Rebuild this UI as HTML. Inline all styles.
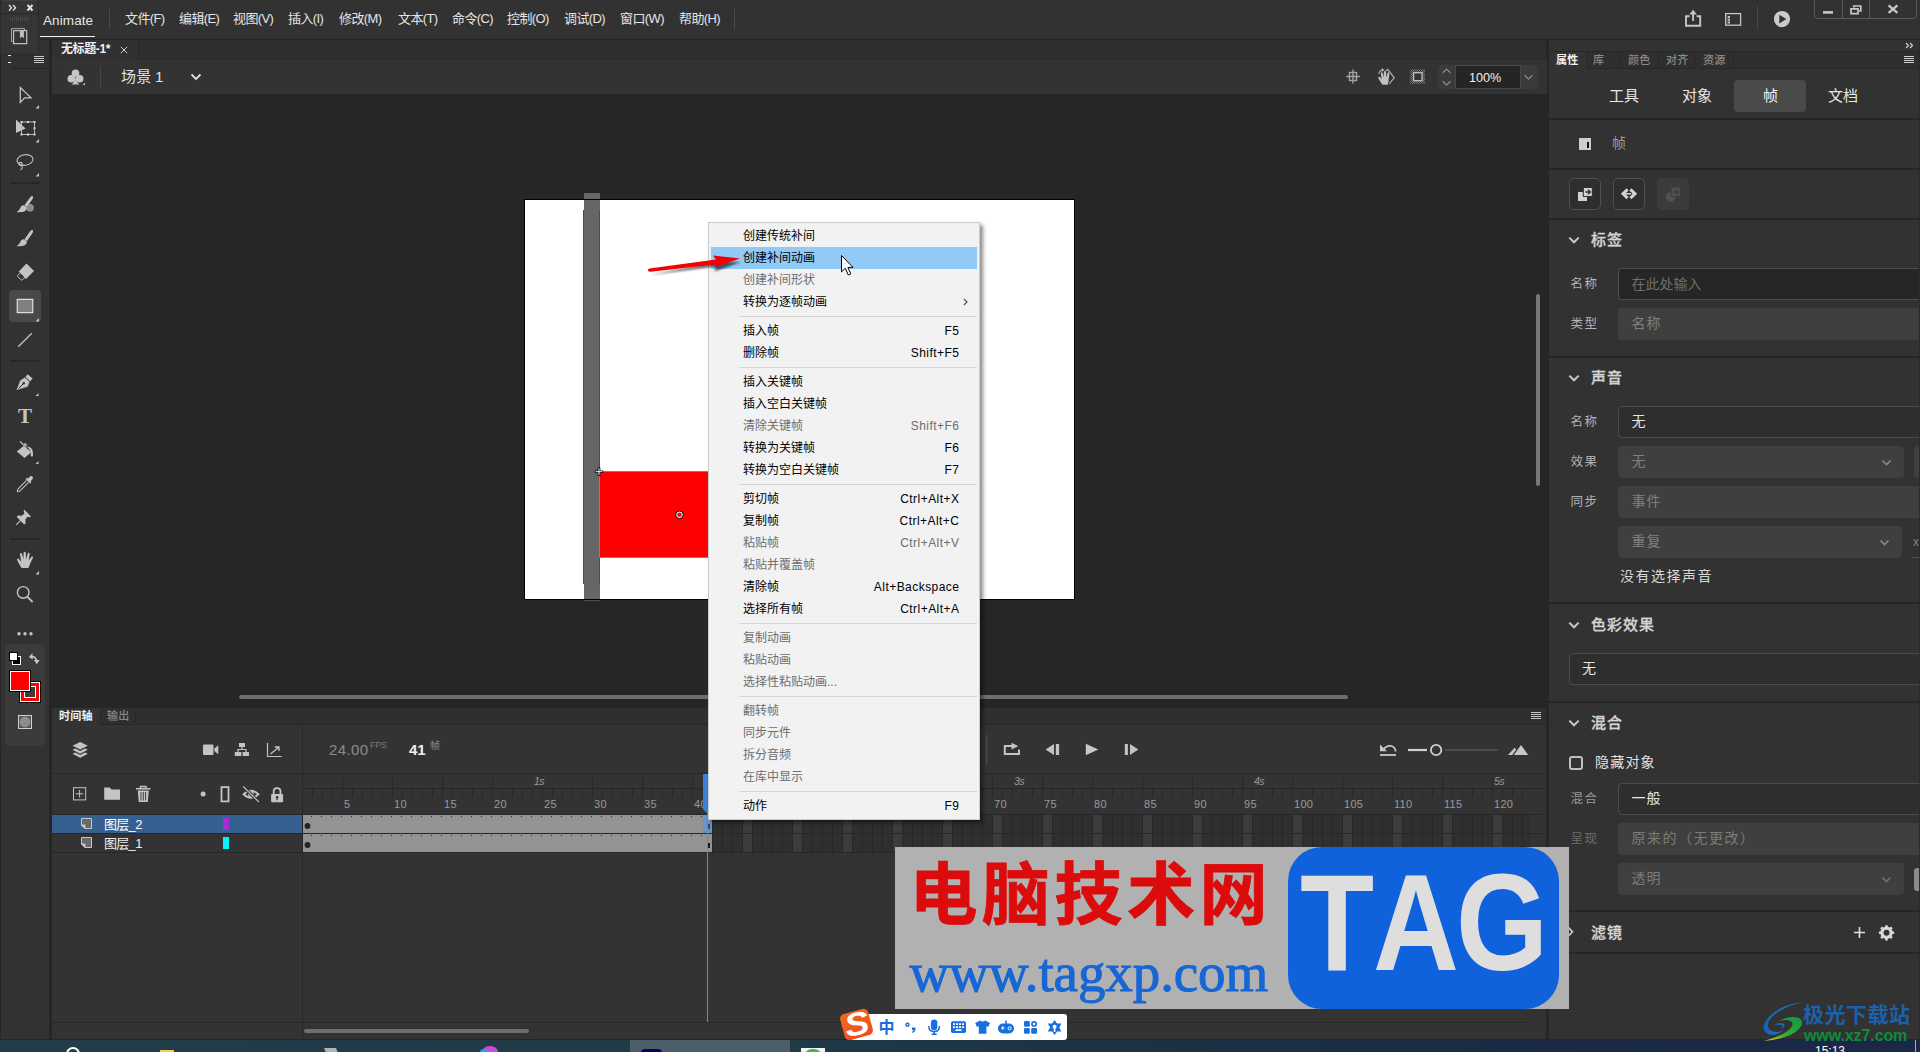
<!DOCTYPE html>
<html lang="zh-CN">
<head>
<meta charset="utf-8">
<title>Animate</title>
<style>
*{box-sizing:border-box;margin:0;padding:0}
html,body{width:1920px;height:1052px;overflow:hidden;background:#262626}
body{position:relative;font-family:"Liberation Sans","Noto Sans CJK SC",sans-serif;font-size:12px;color:#d6d6d6;-webkit-font-smoothing:antialiased}
.abs{position:absolute}
.t{position:absolute;white-space:nowrap;line-height:1}
svg{position:absolute;overflow:visible}
/* top */
#menubar{left:0;top:0;width:1920px;height:39px;background:#323232}
#menubar .mi{top:12px;font-size:13px;color:#e4e4e4;letter-spacing:-0.6px}
#docbar{left:52px;top:40px;width:1494px;height:20px;background:#2f2f2f;border-bottom:1px solid #2a2a2a}
#scenebar{left:52px;top:60px;width:1495px;height:34px;background:#333333}
/* tools */
#tools{left:0;top:40px;width:49px;height:999px;background:#323232}
/* right panel */
#props{left:1549px;top:40px;width:371px;height:999px;background:#323232}
.hdiv{position:absolute;left:0;width:371px;height:2px;background:#262626}
.sec{position:absolute;left:42px;font-size:15px;font-weight:500;-webkit-text-stroke:.3px #d4d4d4;color:#d4d4d4;letter-spacing:1px;line-height:1;white-space:nowrap}
.lbl{position:absolute;left:21.500px;margin-top:1px;font-size:12.500px;color:#b4b4b4;letter-spacing:1.400px;line-height:1;white-space:nowrap}
.inp{position:absolute;left:69px;width:320px;height:32px;border-radius:4px;font-size:14px;line-height:28px;padding-left:12.500px;letter-spacing:1px;white-space:nowrap}
.inp.txt{background:#262626 !important;line-height:30px}
.inp.on{background:#2e2e2e;border:1px solid #4c4c4c;color:#e6e6e6}
.inp.off{background:#3f3f3f;color:#808080;line-height:30.500px;padding-left:13.500px}
/* menu */
#ctx{left:708px;top:222px;width:272px;height:598px;background:#f2f2f2;border:1px solid #cccccc;box-shadow:3px 3px 4px rgba(0,0,0,.45);color:#000;font-size:12px}
#ctx .it{position:absolute;left:2px;width:266px;height:22px;line-height:23px;padding-left:32px;white-space:nowrap}
#ctx .it.dis{color:#6d6d6d}
#ctx .it.hi{background:#91c9f7}
#ctx .it .sc{position:absolute;right:17.600px;top:0;letter-spacing:.45px}
#ctx .sp{position:absolute;left:30px;width:238px;height:1px;background:#d7d7d7}
</style>
</head>
<body>
<!-- ===== top menu bar ===== -->
<div id="menubar" class="abs">
  <div class="abs" style="left:0;top:0;width:38px;height:39px;background:#353535"></div>
  <div class="t" style="left:43px;top:14px;font-size:13.500px;color:#e6e6e6;letter-spacing:.1px">Animate</div>
  <div class="abs" style="left:40px;top:36px;width:55px;height:1px;background:#f0f0f0"></div>
  <div class="abs" style="left:109px;top:9px;width:1px;height:20px;background:#4a4a4a"></div>
  <div class="t mi" style="left:125px">文件(F)</div>
  <div class="t mi" style="left:179px">编辑(E)</div>
  <div class="t mi" style="left:233px">视图(V)</div>
  <div class="t mi" style="left:288px">插入(I)</div>
  <div class="t mi" style="left:339px">修改(M)</div>
  <div class="t mi" style="left:398px">文本(T)</div>
  <div class="t mi" style="left:452px">命令(C)</div>
  <div class="t mi" style="left:507px">控制(O)</div>
  <div class="t mi" style="left:564px">调试(D)</div>
  <div class="t mi" style="left:620px">窗口(W)</div>
  <div class="t mi" style="left:679px">帮助(H)</div>
  <div class="abs" style="left:734px;top:9px;width:1px;height:20px;background:#4a4a4a"></div>
</div>
<div class="abs" style="left:0;top:39px;width:1920px;height:1px;background:#232323"></div>
<div id="docbar" class="abs">
  <div class="abs" style="left:0;top:0;width:87px;height:20px;background:#313131;border-right:1px solid #2a2a2a"></div>
  <div class="t" style="left:9px;top:3px;font-size:12px;font-weight:bold;color:#f0f0f0;letter-spacing:-.4px">无标题-1*</div>
  <svg style="left:68px;top:6px" width="8" height="8" viewBox="0 0 8 8"><path d="M.8 .8 L7.200 7.200 M7.200 .8 L.8 7.200" stroke="#cfcfcf" stroke-width="1" fill="none"/></svg>
</div>
<div id="scenebar" class="abs">
  <svg style="left:14px;top:8px" width="20" height="19" viewBox="66 68 20 19"><g fill="#c6c6c6"><circle cx="75.500" cy="73.200" r="3.800"/><circle cx="71.300" cy="78.800" r="3.800"/><circle cx="79.700" cy="78.800" r="3.800"/><path d="M75.500 76 Q75.800 82 79.500 84.600 H71.500 Q75.200 82 75.500 76Z"/><path d="M85 82.500 V85 H82.500Z"/></g></svg>
  <div class="abs" style="left:48px;top:6px;width:1px;height:23px;background:#454545"></div>
  <div class="t" style="left:69px;top:9px;font-size:15px;color:#e0e0e0;letter-spacing:.3px;word-spacing:-1px">场景 1</div>
  <svg style="left:138px;top:13px" width="12" height="8" viewBox="0 0 12 8"><path d="M1.5 1.5 L6 6 L10.5 1.5" fill="none" stroke="#e0e0e0" stroke-width="1.8"/></svg>
</div>
<!-- ===== left tools ===== -->
<div id="tools" class="abs"></div>
<div class="abs" style="left:0;top:0;width:1px;height:1039px;background:#262626"></div>
<div class="abs" style="left:49px;top:40px;width:3px;height:999px;background:#262626"></div>
<!-- floating header -->
<div class="abs" style="left:0px;top:0px;width:39px;height:55px;background:#353535;border-radius:5px 5px 0 0;border:1px solid #2a2a2a;border-top-color:#404040"></div>
<div class="abs" style="left:1px;top:13px;width:37px;height:1px;background:#2a2a2a"></div>
<svg style="left:8px;top:4px" width="26" height="8" viewBox="0 0 26 8"><path d="M1 1 L3.5 3.8 L1 6.6 M5 1 L7.5 3.8 L5 6.6" fill="none" stroke="#e0e0e0" stroke-width="1.4"/><path d="M19.5 1 L24.5 6.5 M24.5 1 L19.5 6.5" fill="none" stroke="#e0e0e0" stroke-width="2"/></svg>
<div class="abs" style="left:10px;top:17px;width:20px;height:4px;background:repeating-linear-gradient(90deg,#4a4a4a 0 1px,transparent 1px 2px)"></div>
<svg style="left:10px;top:27px" width="18" height="18" viewBox="10 27 18 18"><path d="M11.500 28.600 H24.600 V41.600 H11.500Z" fill="none" stroke="#a8a8a8" stroke-width="1"/><path d="M13.600 30.700 H26.700 V43.600 H13.600Z" fill="#353535" stroke="#bebebe" stroke-width="1.200"/><path d="M19.900 30.700 H23.900 V38.300 L21.900 36.800 L19.900 38.300Z" fill="#bebebe"/></svg>
<div class="abs" style="left:11px;top:55px;width:38px;height:14px;background:#303030;border-bottom:1px solid #262626"></div>
<div class="abs" style="left:8px;top:55px;width:3px;height:1px;background:#e8e8e8"></div>
<div class="abs" style="left:8px;top:62px;width:3px;height:1px;background:#e8e8e8"></div>
<div class="abs" style="left:34px;top:56px;width:10px;height:7px;background:repeating-linear-gradient(180deg,#c8c8c8 0 1px,transparent 1px 2px)"></div>
<!-- select -->
<svg style="left:0;top:76px" width="49" height="670" viewBox="0 76 49 670">
<g fill="none" stroke="#c4c4c4" stroke-width="1.3" stroke-linejoin="miter">
<path d="M20.3 87.6 V102.4 L24.6 97.8 H31 Z"/>
</g>
<path d="M39 105 V108.5 H35.5Z M39 139 V142.5 H35.5Z M39 173 V176.5 H35.5Z M39 318 V321.5 H35.5Z M38.5 393 V396 H35.5Z M38.5 461 V464 H35.5Z M39 571 V574.500 H35.500Z" fill="#c4c4c4"/>
<!-- free transform -->
<path d="M16 119.5 V133 L25.5 128.5Z" fill="#c4c4c4"/>
<path d="M21.500 122 H34.500 V134.500 H21.500Z" fill="none" stroke="#b8b8b8" stroke-width="1"/><path d="M20.500 121 h2 v2 h-2Z M27 121 h2 v2 h-2Z M33.500 121 h2 v2 h-2Z M33.500 127.200 h2 v2 h-2Z M33.500 133.500 h2 v2 h-2Z M27 133.500 h2 v2 h-2Z M20.500 133.500 h2 v2 h-2Z" fill="#d8d8d8"/>
<!-- lasso -->
<g fill="none" stroke="#c4c4c4" stroke-width="1.1">
<ellipse cx="25" cy="160" rx="8" ry="5.3" transform="rotate(-8 25 160)"/>
<circle cx="20.6" cy="164" r="1.6"/>
<path d="M21.5 165.5 Q23.5 168 20.5 170"/>
</g>
<path d="M10 183 H40 M10 361 H40 M10 539 H40" stroke="#272727" stroke-width="2"/>
<!-- fluid brush -->
<path d="M32.6 196 Q33.6 197.2 32.6 199 L27 207 L24.4 205.3 L30.4 197 Q31.4 195.6 32.6 196Z" fill="#c4c4c4"/>
<path d="M24.200 205.4 L27 207.6 Q26.600 211.4 22.400 212 L16.600 212.2 Q19.600 210.4 20.200 208 Q21.200 204.8 24.200 205.4Z" fill="#c4c4c4"/>
<circle cx="30" cy="207.8" r="3.5" fill="#8a8a8a" stroke="#b0b0b0" stroke-width=".6"/>
<!-- brush -->
<path d="M32.6 230 Q33.6 231.2 32.6 233 L27 241 L24.4 239.3 L30.4 231 Q31.4 229.6 32.6 230Z" fill="#c4c4c4"/>
<path d="M24.200 239.4 L27 241.6 Q26.600 245.4 22.400 246 L16.600 246.2 Q19.600 244.4 20.200 242 Q21.200 238.8 24.200 239.4Z" fill="#c4c4c4"/>
<!-- eraser -->
<path d="M26.5 263.5 L34 271 L26 279 L18.8 271.6Z" fill="#c4c4c4"/>
<path d="M20.8 272.6 L17.2 276 L21.8 280.4 L25.2 277" fill="none" stroke="#c4c4c4" stroke-width="1"/>
<!-- rectangle selected -->
<rect x="9" y="290" width="32" height="32" rx="4" fill="#494949"/>
<rect x="17.2" y="299.3" width="15.6" height="13.4" fill="#808080" stroke="#f4f4f4" stroke-width="1"/>
<path d="M39 318 V321.5 H35.5Z" fill="#c4c4c4"/>
<!-- line -->
<path d="M18.2 346.8 L31.8 333.2" stroke="#c4c4c4" stroke-width="1.3"/>
<!-- pen -->
<path d="M27.6 374.3 L32.6 378.6 L30.2 381.2 L25.4 377Z" fill="#c4c4c4"/>
<path d="M24.8 377.8 L29.4 381.8 L27.6 386.6 L16.8 389.8 L20.4 380.6Z M18.6 388.4 L23.4 383.6" fill="#c4c4c4" stroke="#c4c4c4" stroke-width=".4"/>
<path d="M18.4 388.6 L23.2 383.8" stroke="#323232" stroke-width="1"/>
<circle cx="23.8" cy="383.2" r="1.2" fill="#323232"/>
<!-- bucket -->
<path d="M23.5 446 L31.5 452 L24.5 458 L16.8 451.5Z" fill="#c4c4c4"/>
<path d="M20 441.5 L26.5 447.5 M24 445 L25 443.5 L27 445.5" fill="none" stroke="#c4c4c4" stroke-width="1.1"/>
<path d="M27 446.5 Q32.5 447 32.8 452 L33 456 Q31.6 457.6 30.6 455.6 L31 451.5Z" fill="#c4c4c4"/>
<!-- eyedropper -->
<path d="M30.6 476.2 Q32.6 475.6 33 477.6 Q33.2 479 31.8 480 L30.6 481.2 L31.4 482.2 L30.2 483.4 L25.6 479 L26.8 477.8 L28 478.6 L29.2 477.2 Q29.8 476.4 30.6 476.2Z" fill="#c4c4c4"/>
<path d="M26.6 480.4 L18.4 488.6 Q16.6 490.6 17.4 491.6 Q18.4 492.2 20.2 490.6 L28.6 482.4" fill="none" stroke="#c4c4c4" stroke-width="1.1"/>
<!-- pin -->
<path d="M24.4 509.8 L31 516.4 L29.6 517.2 L27.6 516.8 L25.4 519.4 L25.6 523.4 L24.2 524.4 L16.8 517 L17.8 515.6 L21.8 515.8 L24.4 513.4 L23.6 511Z" fill="#c4c4c4"/>
<path d="M20.4 520.6 L16.2 524.8" stroke="#c4c4c4" stroke-width="1.1"/>
<!-- hand -->
<path d="M21.6 568 Q19.8 565.6 17.2 560.2 Q16.6 558.6 17.8 558.4 Q18.8 558.4 19.8 560 L21.2 562 L20 554.6 Q19.8 553.2 20.8 553 Q21.8 553 22.2 554.4 L23.4 559.4 L23.6 553 Q23.6 551.8 24.6 551.8 Q25.6 551.8 25.8 553 L26.2 559.4 L27.6 553.8 Q28 552.6 28.9 552.8 Q29.8 553.1 29.6 554.4 L28.8 560.4 L31 557.2 Q31.8 556.2 32.6 556.6 Q33.3 557.2 32.8 558.2 Q30.4 562.6 29.6 565 Q29 567 28.4 568Z" fill="#c4c4c4"/>
<!-- zoom -->
<circle cx="23.2" cy="592.4" r="5.8" fill="none" stroke="#c4c4c4" stroke-width="1.4"/>
<path d="M27.4 596.8 L32.6 602" stroke="#c4c4c4" stroke-width="1.8"/>
<!-- dots -->
<circle cx="19" cy="633.8" r="1.7" fill="#c4c4c4"/><circle cx="25" cy="633.8" r="1.7" fill="#c4c4c4"/><circle cx="31" cy="633.8" r="1.7" fill="#c4c4c4"/>
<!-- colour box -->
<rect x="5" y="644" width="40" height="102" rx="5" fill="#3b3b3b"/>
<rect x="12.5" y="656.5" width="8" height="8" fill="#000" stroke="#fff" stroke-width="1"/>
<rect x="9.5" y="652.5" width="8" height="8" fill="#fff" stroke="#000" stroke-width="1"/>
<path d="M30 656.6 Q35.6 655.6 36.6 661" fill="none" stroke="#c8c8c8" stroke-width="1.6"/>
<path d="M29 657 L32.4 653.2 L32.8 659.6Z M34 660 H39.6 L36.8 664.2Z" fill="#c8c8c8"/>
<rect x="19.5" y="681.5" width="21" height="21" fill="#fff" stroke="#000" stroke-width="1"/>
<rect x="21" y="683" width="18" height="18" fill="#ff0000"/>
<rect x="24" y="686" width="12" height="12" fill="#fff"/>
<rect x="25" y="687" width="10" height="10" fill="#3b3b3b"/>
<rect x="9.5" y="670.5" width="21" height="21" fill="#fff" stroke="#000" stroke-width="1"/>
<rect x="11" y="672" width="18" height="18" fill="#ff0000"/>
<rect x="18.5" y="715.5" width="13" height="13" fill="#555" stroke="#d0d0d0" stroke-width="1"/>
<circle cx="25" cy="722" r="5.4" fill="#8c8c8c"/>
</svg>
<div class="t" style="left:18px;top:406px;font-family:'Liberation Serif',serif;font-size:21px;color:#c4c4c4;font-weight:bold;transform:scaleX(1.0)">T</div>
<!-- ===== stage ===== -->
<div class="abs" style="left:524px;top:199px;width:551px;height:401px;background:#000"></div>
<div class="abs" style="left:525px;top:200px;width:549px;height:399px;background:#fff"></div>
<div class="abs" style="left:584px;top:193px;width:16px;height:406px;background:#666666"></div>
<div class="abs" style="left:584px;top:199px;width:16px;height:1px;background:#000"></div>
<div class="abs" style="left:584px;top:599px;width:16px;height:1px;background:#000"></div><div class="abs" style="left:584px;top:600px;width:16px;height:1px;background:#4e4e4e"></div>
<div class="abs" style="left:583px;top:210px;width:1px;height:374px;background:#ff0000"></div>
<div class="abs" style="left:599px;top:210px;width:1px;height:374px;background:#ff0000"></div>
<div class="abs" style="left:599px;top:471px;width:111px;height:87px;background:#ff0000;border:1px solid #1da0f0"></div>
<svg style="left:590px;top:464px" width="100" height="60" viewBox="590 464 100 60">
<path d="M599 467.500 V476 M594.800 471.700 H603.200" stroke="#000" stroke-width="2.600" fill="none"/><path d="M599 468.300 V475.200 M595.600 471.700 H602.400" stroke="#fff" stroke-width="1" fill="none"/>
<path d="M598.5 468 V475 M595 471.5 H602" stroke="#fff" stroke-width="1" fill="none" opacity=".0"/>
<circle cx="679.500" cy="514.800" r="3.800" fill="#fff" stroke="#000" stroke-width="1"/><circle cx="679.500" cy="514.800" r="2.300" fill="#ff0000"/>
</svg>
<!-- stage scrollbars -->
<div class="abs" style="left:239px;top:695px;width:1109px;height:4px;border-radius:2px;background:#6e6e6e"></div>
<div class="abs" style="left:1536px;top:294px;width:4px;height:192px;border-radius:2px;background:#787878"></div>
<!-- stage toolbar right (in scene bar) -->
<svg style="left:1340px;top:62px" width="210" height="30" viewBox="1340 62 210 30">
<defs><pattern id="hat" width="2" height="2" patternUnits="userSpaceOnUse"><path d="M0 2 L2 0" stroke="#8a8a8a" stroke-width=".8"/></pattern></defs>
<g fill="none" stroke="#a4a4a4" stroke-width="1.400">
<rect x="1349.500" y="72.500" width="7" height="8"/>
<path d="M1353 69.500 V83.500 M1346.200 76.500 H1359.800"/>
</g>
<!-- hand w/ rotate -->
<path d="M1382.600 84.800 Q1380.600 82.600 1378.400 78.600 Q1377.800 77.200 1378.800 76.800 Q1379.800 76.600 1380.800 78 L1381.800 79.400 L1380.800 73.600 Q1380.700 72.400 1381.600 72.200 Q1382.500 72.200 1382.900 73.400 L1384 77.600 L1383.900 72 Q1384 71 1384.900 71 Q1385.800 71 1386 72 L1386.500 77.600 L1387.500 73 Q1387.900 72 1388.700 72.200 Q1389.500 72.600 1389.400 73.600 L1388.700 79.400 Q1388.600 83.200 1387.600 84.800Z" fill="#c0c0c0"/>
<path d="M1378.800 73.800 Q1379.400 70.400 1383 69.800 M1381.600 68.600 L1383.600 69.800 L1382 71.400" fill="none" stroke="#b4b4b4" stroke-width="1.100"/>
<path d="M1385.600 71.200 L1387.800 69.400 L1394.200 77.800 L1389.400 83.600" fill="none" stroke="#b4b4b4" stroke-width="1.100"/>
<!-- clip -->
<rect x="1410.200" y="69.300" width="14.800" height="14.600" fill="url(#hat)"/>
<rect x="1413.600" y="72.700" width="8.400" height="8" fill="#333" stroke="#c2c2c2" stroke-width="1.300"/>
</svg>
<div class="abs" style="left:1438px;top:65px;width:100px;height:24px;background:#3b3b3b;border-radius:3px"></div>
<div class="abs" style="left:1455px;top:65px;width:66px;height:24px;background:#252525;border:1px solid #484848"></div>
<div class="t" style="left:1469px;top:71.700px;font-size:12.600px;color:#f0f0f0">100%</div>
<svg style="left:1440px;top:65px" width="100" height="24" viewBox="1440 65 100 24"><g fill="none" stroke="#c8c8c8" stroke-width="1"><path d="M1442.800 72.800 L1446.600 69.200 L1450.400 72.800"/><path d="M1442.800 81.400 L1446.600 85 L1450.400 81.400"/><path d="M1524.600 75.200 L1528.500 79 L1532.400 75.200"/></g></svg>
<!-- menu-bar right icons -->
<svg style="left:1680px;top:0" width="240" height="40" viewBox="1680 0 240 40">
<g fill="none" stroke="#c6c6c6" stroke-width="1.900">
<path d="M1689.600 16.200 H1686 V25.800 H1700.200 V16.200 H1696.600"/>
<path d="M1693.100 21 V13"/>
</g>
<path d="M1689.300 14.400 L1693.100 9.800 L1696.900 14.400Z" fill="#c6c6c6"/>
<rect x="1725.700" y="13.600" width="14.900" height="11.600" fill="none" stroke="#c6c6c6" stroke-width="1.300"/>
<path d="M1727.600 16 H1730 V18 H1727.600Z M1727.600 18.700 H1730 V20.700 H1727.600Z M1727.600 21.400 H1730 V23.400 H1727.600Z" fill="#c6c6c6"/>
<path d="M1757.500 6 V30" stroke="#484848" stroke-width="1"/>
<circle cx="1782" cy="19.100" r="8.100" fill="#cacaca"/>
<path d="M1779.300 14.800 L1786.300 19.100 L1779.300 23.400Z" fill="#323232"/>
<path d="M1814.500 0 V15 Q1814.500 18.500 1818 18.500 H1913 Q1916.500 18.500 1916.500 15 V0 M1842.500 0 V18 M1869.500 0 V18" fill="none" stroke="#595959" stroke-width="1"/>
<path d="M1823 12.400 H1833" stroke="#c8c8c8" stroke-width="2.600"/>
<path d="M1853.800 7.600 V6 H1860.800 V11 H1859 M1851 8.800 H1858 V13.600 H1851Z" fill="none" stroke="#c8c8c8" stroke-width="1.700"/>
<path d="M1888.600 5.400 L1897.400 12.800 M1897.400 5.400 L1888.600 12.800" stroke="#c8c8c8" stroke-width="2.300"/>
</svg>
<!-- ===== timeline ===== -->
<div class="abs" style="left:52px;top:708px;width:1494px;height:16px;background:#2f2f2f"></div>
<div class="abs" style="left:52px;top:724px;width:1494px;height:315px;background:#333333"></div>
<div class="abs" style="left:52px;top:708px;width:48px;height:17px;background:#333333"></div>
<div class="abs" style="left:100px;top:708px;width:36px;height:16px;border-left:1px solid #292929;border-right:1px solid #292929"></div>
<div class="abs" style="left:100px;top:724px;width:1446px;height:1px;background:#272727"></div>
<div class="t" style="left:59px;top:711px;font-size:11px;font-weight:bold;color:#f2f2f2;letter-spacing:.3px">时间轴</div>
<div class="t" style="left:107px;top:711px;font-size:11px;font-weight:500;color:#8a8a8a;letter-spacing:.3px">输出</div>
<div class="abs" style="left:1531px;top:712px;width:10px;height:7px;background:repeating-linear-gradient(180deg,#c8c8c8 0 1px,transparent 1px 2px)"></div>
<div class="abs" style="left:52px;top:773px;width:250px;height:1px;background:#272727"></div>
<div class="abs" style="left:302px;top:725px;width:1px;height:314px;background:#272727"></div>
<div class="abs" style="left:52px;top:1022px;width:1478px;height:1px;background:#272727"></div>
<div class="abs" style="left:52px;top:814px;width:1494px;height:1px;background:#272727"></div>
<div class="abs" style="left:52px;top:815px;width:250px;height:18px;background:#35608f"></div>
<div class="abs" style="left:52px;top:833px;width:1494px;height:1px;background:#272727"></div>
<div class="abs" style="left:52px;top:852px;width:1494px;height:1px;background:#272727"></div>
<div class="t" style="left:104px;top:818px;font-size:13px;color:#ffffff;letter-spacing:-.7px">图层_2</div>
<div class="t" style="left:104px;top:837px;font-size:13px;color:#f0f0f0;letter-spacing:-.7px">图层_1</div>
<div class="abs" style="left:223px;top:818px;width:6px;height:12px;background:#a22fd6"></div>
<div class="abs" style="left:223px;top:837px;width:6px;height:12px;background:#00f6ff"></div>
<svg style="left:52px;top:724px" width="1494" height="314" viewBox="52 724 1494 314">
<path d="M81.500 818.5 H91.500 V828.5 H85 L81.500 825 Z" fill="#6a6a6a" stroke="#c8c8c8" stroke-width="1"/><path d="M81.500 825 H85 V828.5Z" fill="#c8c8c8" stroke="#c8c8c8" stroke-width="1"/>
<path d="M81.500 837.5 H91.500 V847.5 H85 L81.500 844 Z" fill="#6a6a6a" stroke="#c8c8c8" stroke-width="1"/><path d="M81.500 844 H85 V847.5Z" fill="#c8c8c8" stroke="#c8c8c8" stroke-width="1"/>
<g fill="#c4c4c4"><path d="M80.200 742 L87.800 745.800 L80.200 749.600 L72.500 745.800Z"/></g><g fill="#c4c4c4"><path d="M72.500 749.800 L75.300 748.500 L80.200 751 L85 748.500 L87.800 749.800 L80.200 753.800Z"/><path d="M72.500 753.800 L75.300 752.500 L80.200 755 L85 752.500 L87.800 753.800 L80.200 757.800Z"/></g>
<path d="M203 745.500 Q203 744.500 204 744.500 H212.500 Q213.500 744.500 213.500 745.500 V754 Q213.500 755 212.500 755 H204 Q203 755 203 754Z M214.300 748.500 L218.300 745.300 V754.300 L214.300 751Z" fill="#c4c4c4"/>
<path d="M239 743 H245 V747 H239Z M234.800 752 H241.400 V756 H234.800Z M242.600 752 H249 V756 H242.600Z" fill="#c4c4c4"/><path d="M242 747 V749.500 M238 752 V749.500 H246 V752" fill="none" stroke="#c4c4c4" stroke-width="1.200"/>
<path d="M267.500 743 V756.500 H281.500" fill="none" stroke="#c4c4c4" stroke-width="1.200"/><path d="M270.500 754 L278.500 747.500 M274.800 747 H279 V751" fill="none" stroke="#c4c4c4" stroke-width="1.300"/>
<rect x="73.500" y="787.700" width="12.200" height="12.200" fill="none" stroke="#c4c4c4" stroke-width="1"/><path d="M79.600 790 V797.600 M75.800 793.800 H83.400" stroke="#c4c4c4" stroke-width="1"/>
<path d="M104.200 787.600 H109.800 L111.600 789.600 H120 V799.800 H104.200Z" fill="#c4c4c4"/>
<path d="M136 788.800 H150.500 M140.500 788 V786.500 H146 V788" fill="none" stroke="#c4c4c4" stroke-width="1.400"/><path d="M137.800 790.500 H148.800 L147.800 802 H138.800Z" fill="#c4c4c4"/><path d="M141 792 V800.500 M143.300 792 V800.500 M145.600 792 V800.500" stroke="#333" stroke-width=".900"/>
<circle cx="203.100" cy="794.100" r="2.500" fill="#c4c4c4"/>
<rect x="221.500" y="787.100" width="7" height="14.300" fill="none" stroke="#c4c4c4" stroke-width="1.800"/>
<path d="M243.600 794.300 Q251 787.300 258.400 794.300 Q251 801.300 243.600 794.300Z" fill="none" stroke="#c4c4c4" stroke-width="1.900"/><circle cx="251" cy="794.300" r="2.900" fill="#c4c4c4"/><path d="M243.600 786.800 L258.600 801.800" stroke="#333" stroke-width="3.200"/><path d="M243.200 786.400 L259 802.200" stroke="#c4c4c4" stroke-width="1.200"/>
<path d="M273.700 794.500 V791.600 Q273.700 788.100 277.100 788.100 Q280.500 788.100 280.500 791.600 V794.500" fill="none" stroke="#c4c4c4" stroke-width="1.800"/><rect x="271.100" y="794" width="12" height="8.200" rx="1" fill="#c4c4c4"/><circle cx="277.100" cy="797.200" r="1.200" fill="#333"/><rect x="276.500" y="797.500" width="1.200" height="2.800" fill="#333"/>
<path d="M303 773.500 H1546 M303 788.500 H1546" stroke="#282828" stroke-width="1"/>
<path d="M312.5 789 V797 M322.5 789 V797 M332.5 789 V797 M342.5 774 V788 M342.5 789 V797 M352.5 789 V797 M362.5 789 V797 M372.5 789 V797 M382.5 789 V797 M392.5 774 V788 M392.5 789 V797 M402.5 789 V797 M412.5 789 V797 M422.5 789 V797 M432.5 789 V797 M442.5 774 V788 M442.5 789 V797 M452.5 789 V797 M462.5 789 V797 M472.5 789 V797 M482.5 789 V797 M492.5 774 V788 M492.5 789 V797 M502.5 789 V797 M512.5 789 V797 M522.5 789 V797 M532.5 789 V797 M542.5 774 V788 M542.5 789 V797 M552.5 789 V797 M562.5 789 V797 M572.5 789 V797 M582.5 789 V797 M592.5 774 V788 M592.5 789 V797 M602.5 789 V797 M612.5 789 V797 M622.5 789 V797 M632.5 789 V797 M642.5 774 V788 M642.5 789 V797 M652.5 789 V797 M662.5 789 V797 M672.5 789 V797 M682.5 789 V797 M692.5 774 V788 M692.5 789 V797 M702.5 789 V797 M712.5 789 V797 M722.5 789 V797 M732.5 789 V797 M742.5 774 V788 M742.5 789 V797 M752.5 789 V797 M762.5 789 V797 M772.5 789 V797 M782.5 789 V797 M792.5 774 V788 M792.5 789 V797 M802.5 789 V797 M812.5 789 V797 M822.5 789 V797 M832.5 789 V797 M842.5 774 V788 M842.5 789 V797 M852.5 789 V797 M862.5 789 V797 M872.5 789 V797 M882.5 789 V797 M892.5 774 V788 M892.5 789 V797 M902.5 789 V797 M912.5 789 V797 M922.5 789 V797 M932.5 789 V797 M942.5 774 V788 M942.5 789 V797 M952.5 789 V797 M962.5 789 V797 M972.5 789 V797 M982.5 789 V797 M992.5 774 V788 M992.5 789 V797 M1002.5 789 V797 M1012.5 789 V797 M1022.5 789 V797 M1032.5 789 V797 M1042.5 774 V788 M1042.5 789 V797 M1052.5 789 V797 M1062.5 789 V797 M1072.5 789 V797 M1082.5 789 V797 M1092.5 774 V788 M1092.5 789 V797 M1102.5 789 V797 M1112.5 789 V797 M1122.5 789 V797 M1132.5 789 V797 M1142.5 774 V788 M1142.5 789 V797 M1152.5 789 V797 M1162.5 789 V797 M1172.5 789 V797 M1182.5 789 V797 M1192.5 774 V788 M1192.5 789 V797 M1202.5 789 V797 M1212.5 789 V797 M1222.5 789 V797 M1232.5 789 V797 M1242.5 774 V788 M1242.5 789 V797 M1252.5 789 V797 M1262.5 789 V797 M1272.5 789 V797 M1282.5 789 V797 M1292.5 774 V788 M1292.5 789 V797 M1302.5 789 V797 M1312.5 789 V797 M1322.5 789 V797 M1332.5 789 V797 M1342.5 774 V788 M1342.5 789 V797 M1352.5 789 V797 M1362.5 789 V797 M1372.5 789 V797 M1382.5 789 V797 M1392.5 774 V788 M1392.5 789 V797 M1402.5 789 V797 M1412.5 789 V797 M1422.5 789 V797 M1432.5 789 V797 M1442.5 774 V788 M1442.5 789 V797 M1452.5 789 V797 M1462.5 789 V797 M1472.5 789 V797 M1482.5 789 V797 M1492.5 774 V788 M1492.5 789 V797 M1502.5 789 V797 M1512.5 789 V797 M1522.5 789 V797" stroke="#282828" stroke-width="1" fill="none"/>
<g font-size="11" fill="#9a9a9a" font-family="Liberation Sans, sans-serif" letter-spacing="0.3">
<text x="344.0" y="807.800">5</text>
<text x="394.0" y="807.800">10</text>
<text x="444.0" y="807.800">15</text>
<text x="494.0" y="807.800">20</text>
<text x="544.0" y="807.800">25</text>
<text x="594.0" y="807.800">30</text>
<text x="644.0" y="807.800">35</text>
<text x="694.0" y="807.800">40</text>
<text x="744.0" y="807.800">45</text>
<text x="794.0" y="807.800">50</text>
<text x="844.0" y="807.800">55</text>
<text x="894.0" y="807.800">60</text>
<text x="944.0" y="807.800">65</text>
<text x="994.0" y="807.800">70</text>
<text x="1044.0" y="807.800">75</text>
<text x="1094.0" y="807.800">80</text>
<text x="1144.0" y="807.800">85</text>
<text x="1194.0" y="807.800">90</text>
<text x="1244.0" y="807.800">95</text>
<text x="1294.0" y="807.800">100</text>
<text x="1344.0" y="807.800">105</text>
<text x="1394.0" y="807.800">110</text>
<text x="1444.0" y="807.800">115</text>
<text x="1494.0" y="807.800">120</text>
</g>
<g font-size="10.500" fill="#9a9a9a" font-family="Liberation Sans, sans-serif" font-style="italic" letter-spacing="-0.5">
<text x="534" y="784.500">1s</text>
<text x="774" y="784.500">2s</text>
<text x="1014" y="784.500">3s</text>
<text x="1254" y="784.500">4s</text>
<text x="1494" y="784.500">5s</text>
</g>
<rect x="303" y="815" width="409" height="18" fill="#939393"/>
<path d="M311 816.5 H703" stroke="#2a2a2a" stroke-width="1" stroke-dasharray="1 9"/>
<circle cx="307.500" cy="826" r="2.900" fill="#222"/>
<rect x="303" y="834" width="409" height="18" fill="#939393"/>
<path d="M311 835.5 H703" stroke="#2a2a2a" stroke-width="1" stroke-dasharray="1 9"/>
<circle cx="307.500" cy="845" r="2.900" fill="#222"/>
<rect x="703" y="815" width="9" height="18" fill="#6d94c6"/>
<rect x="708" y="824" width="2" height="5" fill="#2a4a78"/>
<rect x="708" y="843" width="2" height="5" fill="#1a1a1a"/>
<rect x="712" y="815" width="818" height="18" fill="#2f2f2f"/>
<rect x="743" y="815" width="10" height="18" fill="#3c3c3c"/>
<rect x="793" y="815" width="10" height="18" fill="#3c3c3c"/>
<rect x="843" y="815" width="10" height="18" fill="#3c3c3c"/>
<rect x="893" y="815" width="10" height="18" fill="#3c3c3c"/>
<rect x="943" y="815" width="10" height="18" fill="#3c3c3c"/>
<rect x="993" y="815" width="10" height="18" fill="#3c3c3c"/>
<rect x="1043" y="815" width="10" height="18" fill="#3c3c3c"/>
<rect x="1093" y="815" width="10" height="18" fill="#3c3c3c"/>
<rect x="1143" y="815" width="10" height="18" fill="#3c3c3c"/>
<rect x="1193" y="815" width="10" height="18" fill="#3c3c3c"/>
<rect x="1243" y="815" width="10" height="18" fill="#3c3c3c"/>
<rect x="1293" y="815" width="10" height="18" fill="#3c3c3c"/>
<rect x="1343" y="815" width="10" height="18" fill="#3c3c3c"/>
<rect x="1393" y="815" width="10" height="18" fill="#3c3c3c"/>
<rect x="1443" y="815" width="10" height="18" fill="#3c3c3c"/>
<rect x="1493" y="815" width="10" height="18" fill="#3c3c3c"/>
<rect x="712" y="834" width="818" height="18" fill="#2f2f2f"/>
<rect x="743" y="834" width="10" height="18" fill="#3c3c3c"/>
<rect x="793" y="834" width="10" height="18" fill="#3c3c3c"/>
<rect x="843" y="834" width="10" height="18" fill="#3c3c3c"/>
<rect x="893" y="834" width="10" height="18" fill="#3c3c3c"/>
<rect x="943" y="834" width="10" height="18" fill="#3c3c3c"/>
<rect x="993" y="834" width="10" height="18" fill="#3c3c3c"/>
<rect x="1043" y="834" width="10" height="18" fill="#3c3c3c"/>
<rect x="1093" y="834" width="10" height="18" fill="#3c3c3c"/>
<rect x="1143" y="834" width="10" height="18" fill="#3c3c3c"/>
<rect x="1193" y="834" width="10" height="18" fill="#3c3c3c"/>
<rect x="1243" y="834" width="10" height="18" fill="#3c3c3c"/>
<rect x="1293" y="834" width="10" height="18" fill="#3c3c3c"/>
<rect x="1343" y="834" width="10" height="18" fill="#3c3c3c"/>
<rect x="1393" y="834" width="10" height="18" fill="#3c3c3c"/>
<rect x="1443" y="834" width="10" height="18" fill="#3c3c3c"/>
<rect x="1493" y="834" width="10" height="18" fill="#3c3c3c"/>
<path d="M712.5 815 V833 M712.5 834 V852 M722.5 815 V833 M722.5 834 V852 M732.5 815 V833 M732.5 834 V852 M742.5 815 V833 M742.5 834 V852 M752.5 815 V833 M752.5 834 V852 M762.5 815 V833 M762.5 834 V852 M772.5 815 V833 M772.5 834 V852 M782.5 815 V833 M782.5 834 V852 M792.5 815 V833 M792.5 834 V852 M802.5 815 V833 M802.5 834 V852 M812.5 815 V833 M812.5 834 V852 M822.5 815 V833 M822.5 834 V852 M832.5 815 V833 M832.5 834 V852 M842.5 815 V833 M842.5 834 V852 M852.5 815 V833 M852.5 834 V852 M862.5 815 V833 M862.5 834 V852 M872.5 815 V833 M872.5 834 V852 M882.5 815 V833 M882.5 834 V852 M892.5 815 V833 M892.5 834 V852 M902.5 815 V833 M902.5 834 V852 M912.5 815 V833 M912.5 834 V852 M922.5 815 V833 M922.5 834 V852 M932.5 815 V833 M932.5 834 V852 M942.5 815 V833 M942.5 834 V852 M952.5 815 V833 M952.5 834 V852 M962.5 815 V833 M962.5 834 V852 M972.5 815 V833 M972.5 834 V852 M982.5 815 V833 M982.5 834 V852 M992.5 815 V833 M992.5 834 V852 M1002.5 815 V833 M1002.5 834 V852 M1012.5 815 V833 M1012.5 834 V852 M1022.5 815 V833 M1022.5 834 V852 M1032.5 815 V833 M1032.5 834 V852 M1042.5 815 V833 M1042.5 834 V852 M1052.5 815 V833 M1052.5 834 V852 M1062.5 815 V833 M1062.5 834 V852 M1072.5 815 V833 M1072.5 834 V852 M1082.5 815 V833 M1082.5 834 V852 M1092.5 815 V833 M1092.5 834 V852 M1102.5 815 V833 M1102.5 834 V852 M1112.5 815 V833 M1112.5 834 V852 M1122.5 815 V833 M1122.5 834 V852 M1132.5 815 V833 M1132.5 834 V852 M1142.5 815 V833 M1142.5 834 V852 M1152.5 815 V833 M1152.5 834 V852 M1162.5 815 V833 M1162.5 834 V852 M1172.5 815 V833 M1172.5 834 V852 M1182.5 815 V833 M1182.5 834 V852 M1192.5 815 V833 M1192.5 834 V852 M1202.5 815 V833 M1202.5 834 V852 M1212.5 815 V833 M1212.5 834 V852 M1222.5 815 V833 M1222.5 834 V852 M1232.5 815 V833 M1232.5 834 V852 M1242.5 815 V833 M1242.5 834 V852 M1252.5 815 V833 M1252.5 834 V852 M1262.5 815 V833 M1262.5 834 V852 M1272.5 815 V833 M1272.5 834 V852 M1282.5 815 V833 M1282.5 834 V852 M1292.5 815 V833 M1292.5 834 V852 M1302.5 815 V833 M1302.5 834 V852 M1312.5 815 V833 M1312.5 834 V852 M1322.5 815 V833 M1322.5 834 V852 M1332.5 815 V833 M1332.5 834 V852 M1342.5 815 V833 M1342.5 834 V852 M1352.5 815 V833 M1352.5 834 V852 M1362.5 815 V833 M1362.5 834 V852 M1372.5 815 V833 M1372.5 834 V852 M1382.5 815 V833 M1382.5 834 V852 M1392.5 815 V833 M1392.5 834 V852 M1402.5 815 V833 M1402.5 834 V852 M1412.5 815 V833 M1412.5 834 V852 M1422.5 815 V833 M1422.5 834 V852 M1432.5 815 V833 M1432.5 834 V852 M1442.5 815 V833 M1442.5 834 V852 M1452.5 815 V833 M1452.5 834 V852 M1462.5 815 V833 M1462.5 834 V852 M1472.5 815 V833 M1472.5 834 V852 M1482.5 815 V833 M1482.5 834 V852 M1492.5 815 V833 M1492.5 834 V852 M1502.5 815 V833 M1502.5 834 V852 M1512.5 815 V833 M1512.5 834 V852 M1522.5 815 V833 M1522.5 834 V852" stroke="#272727" stroke-width="1" fill="none"/>
<path d="M703 774 H708 V814.500 L703 809Z" fill="#3b7fd6"/>
<path d="M707.500 814 V1022" stroke="#4a8fe0" stroke-width="1"/>
<rect x="304" y="1029" width="225" height="4" rx="2" fill="#6e6e6e"/>
<path d="M986.500 735 V765" stroke="#484848" stroke-width="2"/>
<path d="M1012 746 H1004.800 V754 H1019 V749.500" fill="none" stroke="#c4c4c4" stroke-width="2"/><path d="M1011.500 742.800 L1018.200 746.200 L1011.500 749.600Z" fill="#c4c4c4"/>
<path d="M1045.600 749.500 L1054 744 V755Z" fill="#c4c4c4"/><rect x="1055.800" y="744" width="3.300" height="11" fill="#c4c4c4"/>
<path d="M1085.800 743.700 L1098.300 749.500 L1085.800 755.300Z" fill="#c8c8c8"/>
<rect x="1124.800" y="744" width="3.100" height="11" fill="#c4c4c4"/><path d="M1130 744 L1138.300 749.500 L1130 755Z" fill="#c4c4c4"/>
<path d="M1383 750 Q1386.500 744.800 1391.500 746 Q1395.400 747.400 1395.600 751.500" fill="none" stroke="#c8c8c8" stroke-width="1.700"/><path d="M1380 744.500 V751.300 H1387Z" fill="#c8c8c8"/><path d="M1380 755 H1396" stroke="#c8c8c8" stroke-width="1.800"/>
<path d="M1408 750 H1427" stroke="#d0d0d0" stroke-width="2.200"/><path d="M1445 750 H1498" stroke="#4c4c4c" stroke-width="2"/><circle cx="1436.100" cy="750" r="5.200" fill="#333" stroke="#d0d0d0" stroke-width="1.800"/>
<path d="M1521 745 L1528.200 755 H1513.800Z M1508 755 L1514.600 747.800 L1516.200 749.600 L1512.200 755Z" fill="#c8c8c8"/>
</svg>
<div class="t" style="left:329px;top:742px;font-size:15px;color:#8c8c8c;letter-spacing:.4px">24.00</div>
<div class="t" style="left:370px;top:741px;font-size:9px;color:#7a7a7a;letter-spacing:-.3px">FPS</div>
<div class="t" style="left:409px;top:742px;font-size:15px;font-weight:bold;color:#f0f0f0">41</div>
<div class="t" style="left:430px;top:741px;font-size:10px;color:#8c8c8c">帧</div>
<!-- ===== properties panel ===== -->
<div id="props" class="abs">
  <div class="abs" style="left:0;top:11px;width:371px;height:18px;background:#2f2f2f;border-top:1px solid #282828"></div>
  <div class="abs" style="left:0;top:12px;width:37px;height:18px;background:#333333"></div>
  <div class="abs" style="left:37px;top:28px;width:334px;height:1px;background:#282828"></div><div class="abs" style="left:37px;top:12px;width:1px;height:16px;background:#292929"></div>
  <div class="abs" style="left:71px;top:12px;width:1px;height:16px;background:#292929"></div>
  <div class="abs" style="left:109px;top:12px;width:1px;height:16px;background:#292929"></div>
  <div class="abs" style="left:146px;top:12px;width:1px;height:16px;background:#292929"></div>
  <div class="abs" style="left:184px;top:12px;width:1px;height:16px;background:#292929"></div>
  <div class="t" style="left:7px;top:15px;font-size:11px;font-weight:bold;color:#f2f2f2;letter-spacing:.3px">属性</div>
  <div class="t" style="left:44px;top:15px;font-size:11px;font-weight:500;color:#8a8a8a">库</div>
  <div class="t" style="left:79px;top:15px;font-size:11px;font-weight:500;color:#8a8a8a;letter-spacing:.3px">颜色</div>
  <div class="t" style="left:117px;top:15px;font-size:11px;font-weight:500;color:#8a8a8a;letter-spacing:.3px">对齐</div>
  <div class="t" style="left:154px;top:15px;font-size:11px;font-weight:500;color:#8a8a8a;letter-spacing:.3px">资源</div>
  <svg style="left:356px;top:2px" width="12" height="8" viewBox="0 0 12 8"><path d="M1 1 L3.500 3.500 L1 6 M5 1 L7.500 3.500 L5 6" fill="none" stroke="#d0d0d0" stroke-width="1.200"/></svg>
  <div class="abs" style="left:355px;top:16px;width:10px;height:7px;background:repeating-linear-gradient(180deg,#d0d0d0 0 1px,transparent 1px 2px)"></div>
  <!-- subtabs -->
  <div class="abs" style="left:185px;top:40px;width:72px;height:32px;border-radius:4px;background:#4a4a4a"></div>
  <div class="t" style="left:60px;top:48px;font-size:15px;color:#e8e8e8">工具</div>
  <div class="t" style="left:133px;top:48px;font-size:15px;color:#e8e8e8">对象</div>
  <div class="t" style="left:214px;top:48px;font-size:15px;color:#f4f4f4">帧</div>
  <div class="t" style="left:279px;top:48px;font-size:15px;color:#e8e8e8">文档</div>
  <div class="hdiv" style="top:78px"></div>
  <!-- frame row -->
  <div class="abs" style="left:30px;top:98px;width:12px;height:12px;background:#cdcdcd"></div>
  <div class="abs" style="left:37.700px;top:101.800px;width:2.300px;height:6px;background:#111"></div>
  <div class="t" style="left:63px;top:96px;font-size:14px;color:#9a9a9a">帧</div>
  <div class="hdiv" style="top:128px"></div>
  <!-- 3 buttons -->
  <div class="abs" style="left:20px;top:138px;width:32px;height:32px;border-radius:5px;background:#2e2e2e;border:1px solid #505050"></div>
  <div class="abs" style="left:64px;top:138px;width:32px;height:32px;border-radius:5px;background:#2e2e2e;border:1px solid #505050"></div>
  <div class="abs" style="left:108px;top:138px;width:32px;height:32px;border-radius:5px;background:#3b3b3b"></div>
  <svg style="left:20px;top:138px" width="120" height="32" viewBox="0 0 120 32">
    <rect x="9" y="14" width="9" height="9" fill="#d2d2d2"/><rect x="14.300" y="9.500" width="9" height="9" fill="#d2d2d2" stroke="#2e2e2e" stroke-width="1"/><path d="M16.500 14 H21 M19 11.600 L21.400 14 L19 16.400" fill="none" stroke="#2e2e2e" stroke-width="1.300"/>
    <path d="M58.600 11.400 L54 15.800 L58.600 20.200 M61.400 11.400 L66 15.800 L61.400 20.200" fill="none" stroke="#d4d4d4" stroke-width="3"/><path d="M56.500 15.800 H63.500" stroke="#d4d4d4" stroke-width="1.600"/><path d="M60.600 13.600 L63 15.800 L60.600 18" fill="none" stroke="#2e2e2e" stroke-width="1"/>
    <circle cx="101.500" cy="19" r="4.800" fill="#505050"/><rect x="102" y="9" width="9.500" height="9.500" fill="#505050" stroke="#3b3b3b" stroke-width="1"/><path d="M104.500 14 H109 M107 11.600 L109.400 14 L107 16.400" fill="none" stroke="#3b3b3b" stroke-width="1.300"/>
  </svg>
  <div class="hdiv" style="top:178px"></div>
  <!-- 标签 -->
  <svg style="left:19px;top:196px" width="13" height="9" viewBox="0 0 13 9"><path d="M1.300 1.600 L6 6.300 L10.700 1.600" fill="none" stroke="#c8c8c8" stroke-width="2"/></svg>
  <div class="sec" style="top:192px">标签</div>
  <div class="lbl" style="top:237px">名称</div>
  <div class="inp on txt" style="top:228px;color:#6e6e6e;letter-spacing:0">在此处输入</div>
  <div class="lbl" style="top:277px">类型</div>
  <div class="inp off" style="top:268px">名称</div>
  <div class="hdiv" style="top:316px"></div>
  <!-- 声音 -->
  <svg style="left:19px;top:334px" width="13" height="9" viewBox="0 0 13 9"><path d="M1.300 1.600 L6 6.300 L10.700 1.600" fill="none" stroke="#c8c8c8" stroke-width="2"/></svg>
  <div class="sec" style="top:330px">声音</div>
  <div class="lbl" style="top:375px">名称</div>
  <div class="inp on" style="top:366px">无</div>
  <div class="lbl" style="top:415px">效果</div>
  <div class="inp off" style="top:406px;width:286px">无</div>
  <div class="abs" style="left:365px;top:406px;width:20px;height:32px;border-radius:4px;background:#3f3f3f"></div>
  <svg style="left:332px;top:419px" width="12" height="8" viewBox="0 0 12 8"><path d="M1.500 1.500 L5.500 5.500 L9.500 1.500" fill="none" stroke="#8a8a8a" stroke-width="1.600"/></svg>
  <div class="lbl" style="top:455px">同步</div>
  <div class="inp off" style="top:446px">事件</div>
  <div class="inp off" style="top:486px;width:284px">重复</div>
  <svg style="left:330px;top:499px" width="12" height="8" viewBox="0 0 12 8"><path d="M1.500 1.500 L5.500 5.500 L9.500 1.500" fill="none" stroke="#8a8a8a" stroke-width="1.600"/></svg>
  <div class="t" style="left:364px;top:496px;font-size:12px;color:#808080">x</div>
  <div class="abs" style="left:363px;top:517px;width:8px;height:1px;background:#555"></div>
  <div class="t" style="left:71px;top:529px;font-size:14px;color:#d8d8d8;letter-spacing:1.500px">没有选择声音</div>
  <div class="hdiv" style="top:562px"></div>
  <!-- 色彩效果 -->
  <svg style="left:19px;top:581px" width="13" height="9" viewBox="0 0 13 9"><path d="M1.300 1.600 L6 6.300 L10.700 1.600" fill="none" stroke="#c8c8c8" stroke-width="2"/></svg>
  <div class="sec" style="top:577px">色彩效果</div>
  <div class="inp on" style="left:20px;top:613px;width:360px;padding-left:12px">无</div>
  <div class="hdiv" style="top:661px"></div>
  <!-- 混合 -->
  <svg style="left:19px;top:679px" width="13" height="9" viewBox="0 0 13 9"><path d="M1.300 1.600 L6 6.300 L10.700 1.600" fill="none" stroke="#c8c8c8" stroke-width="2"/></svg>
  <div class="sec" style="top:675px">混合</div>
  <div class="abs" style="left:20px;top:716px;width:14px;height:14px;border:2px solid #c0c0c0;border-radius:3px"></div>
  <div class="t" style="left:46px;top:715px;font-size:14px;color:#e0e0e0;letter-spacing:1.200px">隐藏对象</div>
  <div class="lbl" style="top:752px;color:#9a9a9a">混合</div>
  <div class="inp on" style="top:743px">一般</div>
  <div class="lbl" style="top:792px;color:#6e6e6e">呈现</div>
  <div class="inp off" style="top:783px;color:#7c7c7c;letter-spacing:1.500px">原来的（无更改）</div>
  <div class="inp off" style="top:823px;width:286px;color:#7c7c7c">透明</div>
  <svg style="left:332px;top:836px" width="12" height="8" viewBox="0 0 12 8"><path d="M1.500 1.500 L5.500 5.500 L9.500 1.500" fill="none" stroke="#707070" stroke-width="1.600"/></svg>
  <div class="abs" style="left:365px;top:828px;width:8px;height:23px;border-radius:3px;background:#8a8a8a"></div>
  <div class="hdiv" style="top:870px"></div>
  <!-- 滤镜 -->
  <svg style="left:18px;top:886px" width="8" height="12" viewBox="0 0 8 12"><path d="M1.500 1.500 L5.500 5.800 L1.500 10" fill="none" stroke="#c8c8c8" stroke-width="1.700"/></svg>
  <div class="sec" style="top:885px">滤镜</div>
  <svg style="left:303px;top:884px" width="50" height="18" viewBox="0 0 50 18"><path d="M7.500 3 V14 M2 8.500 H13" stroke="#e0e0e0" stroke-width="1.600"/>
  <g transform="translate(34.500 8.800)"><circle r="4.600" fill="none" stroke="#d8d8d8" stroke-width="3.200"/><g stroke="#d8d8d8" stroke-width="2.600"><path d="M0 -7.600 V-5 M0 7.600 V5 M-7.600 0 H-5 M7.600 0 H5 M-5.400 -5.400 L-3.600 -3.600 M5.400 5.400 L3.600 3.600 M-5.400 5.400 L-3.600 3.600 M5.400 -5.400 L3.600 -3.600"/></g></g></svg>
  <div class="hdiv" style="top:912px;height:2px"></div>
  <div class="abs" style="left:370px;top:0;width:1px;height:999px;background:#2b2b2b"></div>
</div>
<!-- ===== context menu ===== -->
<div id="ctx" class="abs">
<div class="it" style="top:2px">创建传统补间</div>
<div class="it hi" style="top:24px">创建补间动画</div>
<div class="it dis" style="top:46px">创建补间形状</div>
<div class="it" style="top:68px">转换为逐帧动画<svg style="right:9px;top:7px;left:auto" width="5" height="8" viewBox="0 0 5 8"><path d="M.8 .8 L4 4 L.8 7.200" fill="none" stroke="#444" stroke-width="1.100"/></svg></div>
<div class="sp" style="top:93px"></div>
<div class="it" style="top:97px">插入帧<span class="sc">F5</span></div>
<div class="it" style="top:119px">删除帧<span class="sc">Shift+F5</span></div>
<div class="sp" style="top:144px"></div>
<div class="it" style="top:148px">插入关键帧</div>
<div class="it" style="top:170px">插入空白关键帧</div>
<div class="it dis" style="top:192px">清除关键帧<span class="sc">Shift+F6</span></div>
<div class="it" style="top:214px">转换为关键帧<span class="sc">F6</span></div>
<div class="it" style="top:236px">转换为空白关键帧<span class="sc">F7</span></div>
<div class="sp" style="top:261px"></div>
<div class="it" style="top:265px">剪切帧<span class="sc">Ctrl+Alt+X</span></div>
<div class="it" style="top:287px">复制帧<span class="sc">Ctrl+Alt+C</span></div>
<div class="it dis" style="top:309px">粘贴帧<span class="sc">Ctrl+Alt+V</span></div>
<div class="it dis" style="top:331px">粘贴并覆盖帧</div>
<div class="it" style="top:353px">清除帧<span class="sc">Alt+Backspace</span></div>
<div class="it" style="top:375px">选择所有帧<span class="sc">Ctrl+Alt+A</span></div>
<div class="sp" style="top:400px"></div>
<div class="it dis" style="top:404px">复制动画</div>
<div class="it dis" style="top:426px">粘贴动画</div>
<div class="it dis" style="top:448px">选择性粘贴动画...</div>
<div class="sp" style="top:473px"></div>
<div class="it dis" style="top:477px">翻转帧</div>
<div class="it dis" style="top:499px">同步元件</div>
<div class="it dis" style="top:521px">拆分音频</div>
<div class="it dis" style="top:543px">在库中显示</div>
<div class="sp" style="top:568px"></div>
<div class="it" style="top:572px">动作<span class="sc">F9</span></div>
</div>
<!-- ===== overlays ===== -->
<!-- red arrow -->
<svg style="left:640px;top:245px" width="110" height="40" viewBox="640 245 110 40">
<defs><filter id="ash" x="-10%" y="-30%" width="120%" height="180%"><feGaussianBlur stdDeviation="1.300"/></filter></defs>
<path d="M650 275 L716 266.500 L714.500 271.500 L741 262 L716 262Z" fill="#000" opacity=".6" filter="url(#ash)"/>
<path d="M649.500 268.600 Q647.600 269.200 648 270.600 Q648.600 272 650.500 271.800 L716.500 264.300 L714 267.800 L740 258.600 L713 255.400 L716 259.600 Z" fill="#f40000"/>
</svg>
<!-- cursor -->
<svg style="left:840px;top:253.500px" width="16" height="24" viewBox="0 0 16 24"><path d="M1.500 1.500 V17.800 L5.300 14.300 L8.300 21 L10.800 19.900 L7.900 13.400 H13Z" fill="#fff" stroke="#000" stroke-width="1" stroke-linejoin="miter"/></svg>
<!-- taskbar -->
<div class="abs" style="left:0;top:1040px;width:1920px;height:12px;background:linear-gradient(90deg,#213d48 0%,#203a46 40%,#1d3142 60%,#1b2a45 80%,#1a2748 100%)"></div>
<div class="abs" style="left:630px;top:1040px;width:160px;height:12px;background:#4c5e68"></div>
<div class="abs" style="left:66px;top:1047px;width:14px;height:14px;border-radius:50%;border:2px solid #fff"></div>
<div class="abs" style="left:160px;top:1050px;width:14px;height:3px;background:#f3d25a"></div>
<div class="abs" style="left:325px;top:1048px;width:12px;height:5px;background:#aeb4b8;transform:skewX(20deg)"></div>
<div class="abs" style="left:482px;top:1046px;width:16px;height:12px;border-radius:50%;background:#c84be0"></div>
<div class="abs" style="left:480px;top:1049px;width:8px;height:6px;border-radius:50% 0 0 0;background:#21a3e8"></div>
<div class="abs" style="left:641px;top:1049px;width:21px;height:6px;border-radius:4px 4px 0 0;background:#080060"></div>
<div class="abs" style="left:801px;top:1048px;width:24px;height:6px;background:#f4f4f4"></div>
<div class="abs" style="left:805px;top:1049px;width:16px;height:10px;border-radius:50%;background:#4caf50"></div>
<div class="t" style="left:1815px;top:1045px;font-size:12px;color:#fff">15:13</div>
<div class="abs" style="left:1915px;top:1040px;width:1px;height:12px;background:#aab"></div>
<!-- tag watermark -->
<div class="abs" style="left:895px;top:847px;width:674px;height:162px;background:#b1b1b1"></div>
<div class="abs" style="left:1288px;top:847px;width:271px;height:162px;border-radius:34px;background:#0f62dc"></div>
<div class="t" id="wm1" style="left:909.500px;top:856px;font-size:68px;font-weight:700;color:#dc0c0c;letter-spacing:4.500px;-webkit-text-stroke:.8px #dc0c0c;font-family:'Noto Sans CJK SC','Liberation Sans',sans-serif">电脑技术网</div>
<div class="t" id="wm2" style="left:909.500px;top:945px;font-size:55px;color:#1766d6;letter-spacing:-.1px;-webkit-text-stroke:1px #1766d6;font-family:'Liberation Serif','Noto Serif CJK SC',serif;transform-origin:0 0">www.tagxp.com</div>
<div class="t" id="wm3" style="left:1290px;top:853px;width:266px;height:140px;font-size:138px;font-weight:bold;color:#dedede"><span style="position:absolute;left:9.500px;top:0;transform-origin:0 0;transform:scaleX(.88)">T</span><span style="position:absolute;left:82.500px;top:0;transform-origin:0 0;transform:scaleX(.862)">A</span><span style="position:absolute;left:166px;top:0;transform-origin:0 0;transform:scaleX(.858)">G</span></div>
<!-- IME bar -->
<div class="abs" style="left:852px;top:1014px;width:215px;height:26px;background:#fff;border-radius:0 3px 3px 0"></div>
<div class="abs" style="left:842px;top:1011px;width:29px;height:27px;border-radius:5px;background:linear-gradient(160deg,#f56a1e,#ee4a1e);transform:rotate(-15deg)"></div>
<div class="t" style="left:846px;top:1008px;font-size:32px;font-weight:bold;font-style:italic;color:#fff;transform:rotate(-12deg) scaleX(1.150);transform-origin:50% 50%">S</div>
<div class="t" style="left:878.500px;top:1018px;font-size:16px;font-weight:700;color:#1a6fe0;font-family:'Noto Sans CJK SC','Liberation Sans',sans-serif">中</div>
<svg style="left:900px;top:1016px" width="166" height="24" viewBox="900 1016 166 24">
<g fill="#1a6fe0">
<circle cx="907.500" cy="1024.800" r="1.500" fill="none" stroke="#1a6fe0" stroke-width="1.400"/>
<path d="M912 1027.600 H915.400 V1030 Q915.200 1032.200 912.400 1033 L912 1031.800 Q913.600 1031.200 913.600 1030 H912Z"/>
<rect x="930.900" y="1019.400" width="6.500" height="10.800" rx="3.250"/><path d="M928.800 1026 Q928.800 1031.600 934.150 1031.600 Q939.500 1031.600 939.500 1026" fill="none" stroke="#1a6fe0" stroke-width="1.500"/><rect x="933.300" y="1031.600" width="1.700" height="2.400"/><rect x="931.400" y="1033.600" width="5.500" height="1.400" rx=".7"/>
<rect x="951" y="1021.200" width="15" height="11.800" rx="1.800"/>
<path d="M975.200 1023 L980 1020.400 Q982.600 1022.600 985.200 1020.400 L990 1023 L988.200 1027 L986.400 1026.200 V1033.700 H978.800 V1026.200 L977 1027Z"/>
<rect x="998" y="1023.500" width="16" height="10" rx="5"/><rect x="1005.200" y="1020.600" width="1.600" height="3.500"/>
<rect x="1024" y="1021" width="5.800" height="5.800" rx="1.200"/><rect x="1024" y="1027.900" width="5.800" height="5.800" rx="1.200"/><rect x="1031.200" y="1027.900" width="5.800" height="5.800" rx="1.200"/>
<circle cx="1034.100" cy="1023.900" r="2.100" fill="none" stroke="#1a6fe0" stroke-width="1.700"/>
<path d="M1054.600 1020 L1057 1023.600 H1061.400 L1059.200 1027.500 L1061.400 1031.400 H1057 L1054.600 1035 L1052.200 1031.400 H1047.800 L1050 1027.500 L1047.800 1023.600 H1052.200Z"/>
</g>
<g fill="#fff"><path d="M953 1023.300 h2 v1.800 h-2Z M956 1023.300 h2 v1.800 h-2Z M959 1023.300 h2 v1.800 h-2Z M962 1023.300 h2 v1.800 h-2Z M953 1026.200 h2 v1.800 h-2Z M956 1026.200 h2 v1.800 h-2Z M959 1026.200 h2 v1.800 h-2Z M962 1026.200 h2 v1.800 h-2Z M955.500 1029.300 h6 v1.700 h-6Z"/><path d="M1001 1028 H1004.600 M1002.800 1026.200 V1029.800" stroke="#fff" stroke-width="1" fill="none"/><circle cx="1009.600" cy="1028.300" r="1.500" fill="none" stroke="#fff" stroke-width="1"/><circle cx="1054.600" cy="1026.800" r="2" /><rect x="1053.800" y="1028" width="1.600" height="4"/></g>
</svg>
<!-- xz7 logo -->
<svg style="left:1755px;top:998px" width="56" height="48" viewBox="1755 998 56 48">
<defs><linearGradient id="lg1" x1="0" y1="0" x2="1" y2="0"><stop offset="0" stop-color="#1560b8"/><stop offset="1" stop-color="#1f8fc8"/></linearGradient><linearGradient id="lg2" x1="1" y1="0" x2="0" y2="1"><stop offset="0" stop-color="#0d9a40"/><stop offset=".6" stop-color="#3aa83a"/><stop offset="1" stop-color="#d8c818"/></linearGradient></defs>
<path d="M1805 1002 Q1782 1004 1770 1016 Q1758 1028 1768 1034 Q1776 1037 1784 1030 Q1776 1034 1770 1030 Q1764 1024 1774 1015 Q1786 1005 1805 1002Z" fill="url(#lg1)"/>
<path d="M1779 1021 Q1790 1015 1799 1018 Q1806 1022 1798 1030 Q1788 1039 1764 1041 Q1782 1036 1790 1029 Q1796 1022 1788 1020 Q1783 1019.500 1779 1021Z" fill="url(#lg2)"/>
<path d="M1773 1026 Q1778 1021 1784 1024 Q1786 1027 1781 1029 Q1784 1026 1781 1025 Q1777 1024 1773 1026Z" fill="#1767b8"/>
</svg>
<div class="t" style="left:1803px;top:1003px;font-size:21px;font-weight:bold;color:#1b61ab;font-family:'Noto Sans CJK SC','Liberation Sans',sans-serif;letter-spacing:.5px">极光下载站</div>
<div class="t" style="left:1804px;top:1028px;font-size:16px;font-weight:bold;color:#0e8c3e;letter-spacing:-.1px">www.xz7.com</div>
</body>
</html>
